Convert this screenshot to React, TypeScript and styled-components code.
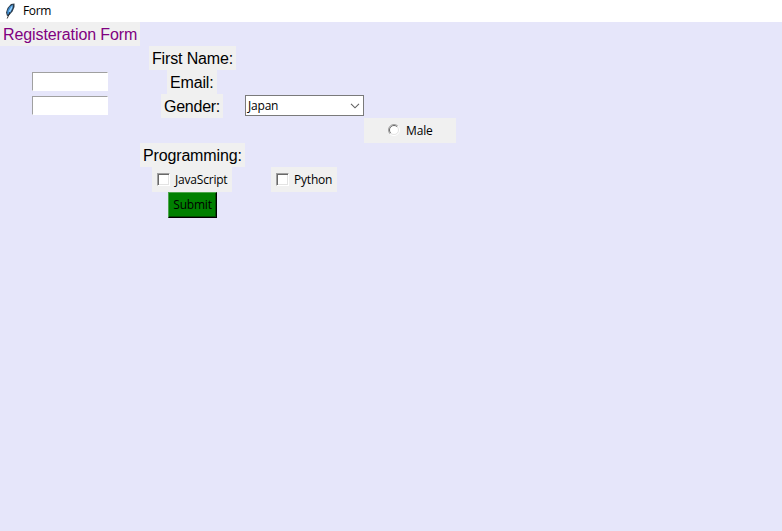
import React from "react";
import styled, { createGlobalStyle } from "styled-components";

const GlobalStyle = createGlobalStyle`
  html, body { margin: 0; background: #e6e6fa; overflow: hidden; }
  * { box-sizing: border-box; }
`;

const Window = styled.main`
  display: flex;
  flex-direction: column;
  height: 100vh;
  background: #e6e6fa;
  color: #000;
  font: 12px/16px "Open Sans", "Noto Sans", sans-serif;
`;

const TitleBar = styled.header`
  display: flex;
  align-items: center;
  flex: 0 0 22px;
  padding-left: 3px;
  background: #fff;
`;

const WindowTitle = styled.span`
  margin-left: 4px;
  white-space: nowrap;
  letter-spacing: -0.35px;
`;

const FormGrid = styled.form`
  display: grid;
  grid-template-columns: 140px 105px 119px 92px;
  grid-template-rows: 24px 24px 24px 24px 25px 24px 25px 26px;
  align-items: center;
  justify-items: center;
`;

const Cell = styled.div<{ $col: number; $row: number; $snap?: boolean }>`
  grid-column: ${(p) => p.$col};
  grid-row: ${(p) => p.$row};
  display: flex;
  margin-right: ${(p) => (p.$snap ? 1 : 0)}px;
`;

const Label = styled.label<{ $width: number; $color?: string; $spacing?: number }>`
  width: ${(p) => p.$width}px;
  height: 24px;
  padding: 1px 0 0 3px;
  background: #f0f0f0;
  color: ${(p) => p.$color ?? "#000"};
  font: 16px/23px "Liberation Sans", Arial, sans-serif;
  letter-spacing: ${(p) => p.$spacing ?? -0.15}px;
  white-space: nowrap;
`;

const Entry = styled.input`
  width: 76px;
  height: 19px;
  margin: 0 0 1px;
  padding: 0 2px;
  border: 1px solid;
  border-color: #a0a0a0 #fff #fff #a0a0a0;
  border-radius: 0;
  background: #fff;
  outline: none;
`;

const Combo = styled.button`
  display: flex;
  align-items: center;
  justify-content: space-between;
  width: 119px;
  height: 21px;
  margin: 0 0 1px;
  padding: 0 3px 0 2px;
  border: 1px solid #7a7a7a;
  background: #fff;
  color: #000;
  font: inherit;
`;

const Choice = styled.label<{ $width: number; $left: number }>`
  display: flex;
  align-items: center;
  width: ${(p) => p.$width}px;
  height: 25px;
  padding-left: ${(p) => p.$left}px;
  background: #f0f0f0;
`;

const CheckMark = styled.input`
  appearance: none;
  width: 13px;
  height: 13px;
  margin: 0 5px 0 0;
  border: 1px solid;
  border-color: #a0a0a0 #fff #fff #a0a0a0;
  background: #fff;
  box-shadow: inset 1px 1px #696969, inset -1px -1px #e3e3e3;
`;

const ChoiceText = styled.span<{ $spacing: number }>`
  letter-spacing: ${(p) => p.$spacing}px;
  white-space: nowrap;
`;

const Submit = styled.button`
  width: 49px;
  height: 26px;
  padding: 0;
  border: 1px solid;
  border-color: #4da64d #000 #000 #4da64d;
  background: #008000;
  box-shadow: inset -1px -1px #004d00;
  color: #000;
  font: inherit;
  letter-spacing: -0.2px;
`;

const RadioIcon = styled.svg`
  margin: 0 6px 1px 0;
`;

const Feather = () => (
  <svg width="16" height="16" viewBox="0 0 16 16">
    <path d="M4 13L3 9.5L4.5 5L8 1L11.5 0.5V4L9.5 8.5L6 12.5Z" fill="#2b3a49" />
    <path d="M4.3 11V8L6.3 4L9.8 1.5L9.6 5L7.5 9.5L5.2 12Z" fill="#3f8fd4" />
    <path d="M5.5 8.5L9.5 2L9.2 5L7 9Z" fill="#9bd4ff" />
    <path d="M7 9L4.2 15.5" fill="none" stroke="#202020" strokeWidth="0.9" />
  </svg>
);

const RadioRing = () => (
  <RadioIcon width="12" height="12" viewBox="0 0 12 12">
    <circle cx="6" cy="6" r="5" fill="#fff" />
    <path d="M2.1 9.9A5.5 5.5 0 0 1 9.9 2.1" fill="none" stroke="#a0a0a0" />
    <path d="M2.8 9.2A4.5 4.5 0 0 1 9.2 2.8" fill="none" stroke="#696969" />
    <path d="M9.9 2.1A5.5 5.5 0 0 1 2.1 9.9" fill="none" stroke="#fff" />
    <path d="M9.2 2.8A4.5 4.5 0 0 1 2.8 9.2" fill="none" stroke="#e3e3e3" />
  </RadioIcon>
);

export default function App() {
  return (
    <Window>
      <GlobalStyle />
      <TitleBar>
        <Feather />
        <WindowTitle>Form</WindowTitle>
      </TitleBar>
      <FormGrid onSubmit={(e) => e.preventDefault()}>
        <Cell $col={1} $row={1}><Label as="div" $width={140} $color="#800080" $spacing={-0.1}>Registeration Form</Label></Cell>
        <Cell $col={2} $row={2}><Label htmlFor="first" $width={87}>First Name:</Label></Cell>
        <Cell $col={1} $row={3}><Entry id="first" /></Cell>
        <Cell $col={2} $row={3} $snap><Label htmlFor="email" $width={50}>Email:</Label></Cell>
        <Cell $col={1} $row={4}><Entry id="email" /></Cell>
        <Cell $col={2} $row={4} $snap><Label as="div" $width={62} $spacing={-0.25}>Gender:</Label></Cell>
        <Cell $col={3} $row={4}>
          <Combo type="button">
            <ChoiceText $spacing={-0.2}>Japan</ChoiceText>
            <svg width="10" height="6" viewBox="0 0 10 6"><path d="M1 0.8L5 4.8L9 0.8" fill="none" stroke="#606060" strokeWidth="1.1" /></svg>
          </Combo>
        </Cell>
        <Cell $col={4} $row={5}>
          <Choice $width={92} $left={24}><RadioRing /><ChoiceText $spacing={-0.15}>Male</ChoiceText></Choice>
        </Cell>
        <Cell $col={2} $row={6}><Label as="div" $width={105}>Programming:</Label></Cell>
        <Cell $col={2} $row={7} $snap>
          <Choice $width={80} $left={5}><CheckMark type="checkbox" /><ChoiceText $spacing={-0.2}>JavaScript</ChoiceText></Choice>
        </Cell>
        <Cell $col={3} $row={7} $snap>
          <Choice $width={66} $left={5}><CheckMark type="checkbox" /><ChoiceText $spacing={-0.2}>Python</ChoiceText></Choice>
        </Cell>
        <Cell $col={2} $row={8}><Submit>Submit</Submit></Cell>
      </FormGrid>
    </Window>
  );
}
